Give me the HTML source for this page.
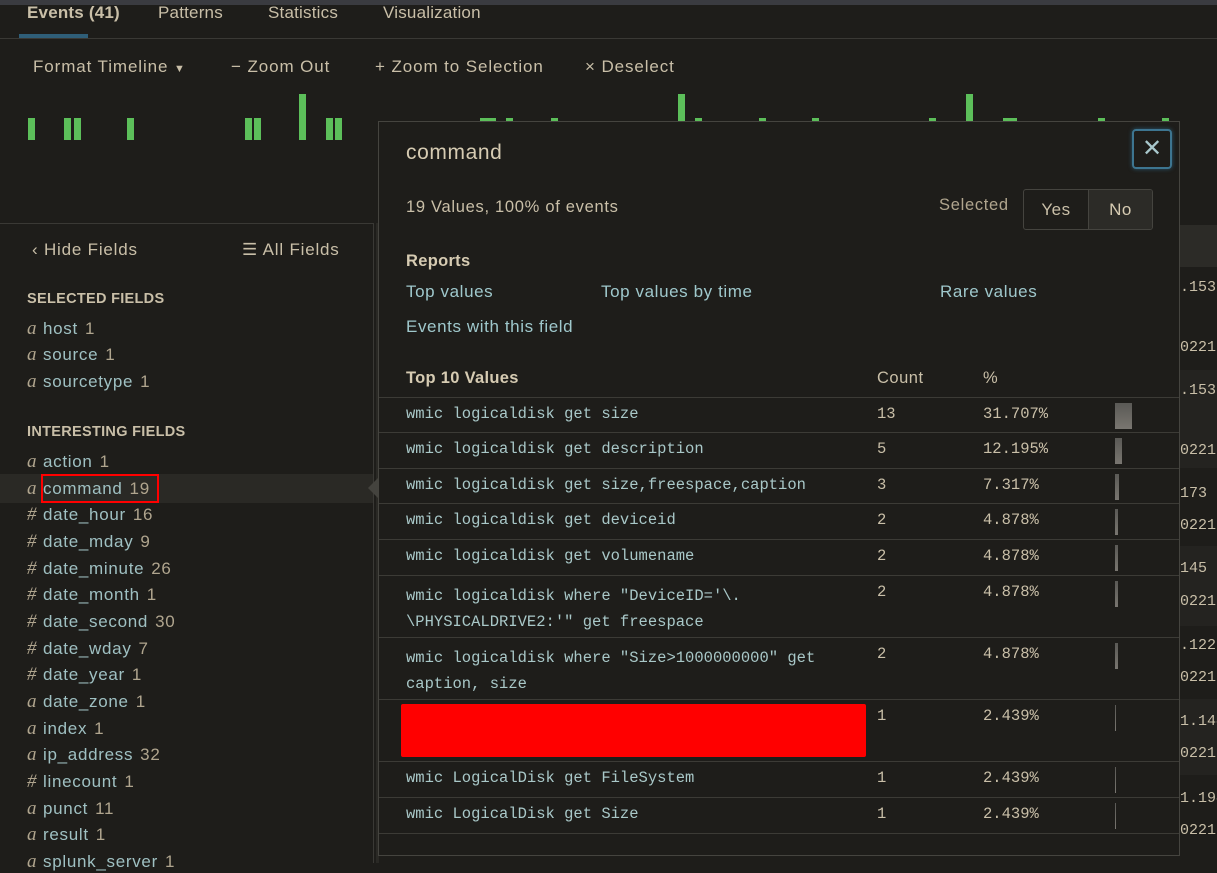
<!DOCTYPE html>
<html><head><style>
*{margin:0;padding:0;box-sizing:border-box}
body{width:1217px;height:863px;overflow:hidden;background:#1e1d1a;font-family:"Liberation Sans",sans-serif;color:#c9bfa8;position:relative;letter-spacing:0.5px}
.a{position:absolute;white-space:nowrap}
.tab{top:3px;font-size:17px;color:#c9bfa8;letter-spacing:0.2px}
.tl{top:57px;font-size:17px;color:#c9bfa8;letter-spacing:0.9px}
.bar{position:absolute;background:#5cbf5a;width:7px}
.f{position:absolute;left:27px;font-size:17px;color:#9fc0c2;letter-spacing:0.7px}
.f i{font-family:"Liberation Serif",serif;color:#b0a58e;font-size:19px;display:inline-block;width:16px}
.f b{font-weight:normal;color:#b0a58e;margin-left:7px}
.sh{position:absolute;left:27px;font-size:14.5px;font-weight:bold;color:#c9bfa8;letter-spacing:0.3px}
.ev{position:absolute;left:1180px;font-family:"Liberation Mono",monospace;font-size:15px;color:#c9bfa8;letter-spacing:0}
.row{position:absolute;left:379px;width:800px;border-top:1px solid #3c3b36}
.mono{font-family:"Liberation Mono",monospace;font-size:15.5px;color:#a9c8c8;letter-spacing:0}
.cnt{position:absolute;left:498px;top:7px;font-family:"Liberation Mono",monospace;font-size:15.5px;color:#c9bfa8;letter-spacing:0}
.pct{position:absolute;left:604px;top:7px;font-family:"Liberation Mono",monospace;font-size:15.5px;color:#c9bfa8;letter-spacing:0}
.vb{position:absolute;left:736px;top:5px;background:linear-gradient(#5a5955,#797670)}
.lk{color:#9fc8cc;font-size:17px;letter-spacing:0.6px}
</style></head><body>
<div class="a" style="left:0;top:0;width:1217px;height:5px;background:#3a3b40"></div>
<div class="a tab" style="left:27px;font-weight:bold">Events (41)</div>
<div class="a tab" style="left:158px">Patterns</div>
<div class="a tab" style="left:268px">Statistics</div>
<div class="a tab" style="left:383px">Visualization</div>
<div class="a" style="left:19px;top:34px;width:69px;height:4px;background:#2f5e78"></div>
<div class="a" style="left:0;top:38px;width:1217px;height:1px;background:#3a3935"></div>
<div class="a tl" style="left:33px">Format Timeline <span style="font-size:11px">▼</span></div>
<div class="a tl" style="left:231px">− Zoom Out</div>
<div class="a tl" style="left:375px">+ Zoom to Selection</div>
<div class="a tl" style="left:585px">× Deselect</div>
<div class="bar" style="left:28px;top:118px;height:22px"></div>
<div class="bar" style="left:64px;top:118px;height:22px"></div>
<div class="bar" style="left:74px;top:118px;height:22px"></div>
<div class="bar" style="left:127px;top:118px;height:22px"></div>
<div class="bar" style="left:245px;top:118px;height:22px"></div>
<div class="bar" style="left:254px;top:118px;height:22px"></div>
<div class="bar" style="left:299px;top:94px;height:46px"></div>
<div class="bar" style="left:326px;top:118px;height:22px"></div>
<div class="bar" style="left:335px;top:118px;height:22px"></div>
<div class="bar" style="left:480px;top:118px;height:4px;width:16px"></div>
<div class="bar" style="left:506px;top:118px;height:4px"></div>
<div class="bar" style="left:551px;top:118px;height:4px"></div>
<div class="bar" style="left:678px;top:94px;height:28px"></div>
<div class="bar" style="left:695px;top:118px;height:4px"></div>
<div class="bar" style="left:759px;top:118px;height:4px"></div>
<div class="bar" style="left:812px;top:118px;height:4px"></div>
<div class="bar" style="left:929px;top:118px;height:4px"></div>
<div class="bar" style="left:966px;top:94px;height:28px"></div>
<div class="bar" style="left:1003px;top:118px;height:4px;width:14px"></div>
<div class="bar" style="left:1098px;top:118px;height:4px"></div>
<div class="bar" style="left:1162px;top:118px;height:4px"></div>
<!-- sidebar -->
<div class="a" style="left:0;top:223px;width:374px;height:640px;border-top:1px solid #3a3935;border-right:1px solid #3a3935"></div>
<div class="a" style="left:376px;top:223px;width:3px;height:640px;background:#2a2925"></div>
<div class="a" style="left:32px;top:240px;font-size:17px;color:#c9bfa8;letter-spacing:0.8px">‹ Hide Fields</div>
<div class="a" style="left:242px;top:240px;font-size:17px;color:#c9bfa8;letter-spacing:0.8px">☰ All Fields</div>
<div class="sh" style="top:291px">SELECTED FIELDS</div>
<div class="f" style="top:318px"><i>a</i>host<b>1</b></div>
<div class="f" style="top:344px"><i>a</i>source<b>1</b></div>
<div class="f" style="top:371px"><i>a</i>sourcetype<b>1</b></div>
<div class="sh" style="top:424px">INTERESTING FIELDS</div>
<div class="f" style="top:451px"><i>a</i>action<b>1</b></div>
<div class="a" style="left:0;top:474px;width:373px;height:29px;background:#2a2925"></div>
<div class="a" style="left:368px;top:478px;width:0;height:0;border-top:10px solid transparent;border-bottom:10px solid transparent;border-right:10px solid #44433e"></div>
<div class="f" style="top:478px"><i>a</i>command<b>19</b></div>
<div class="a" style="left:41px;top:474px;width:118px;height:29px;border:2px solid #f00"></div>
<div class="f" style="top:504px"><i>#</i>date_hour<b>16</b></div>
<div class="f" style="top:531px"><i>#</i>date_mday<b>9</b></div>
<div class="f" style="top:558px"><i>#</i>date_minute<b>26</b></div>
<div class="f" style="top:584px"><i>#</i>date_month<b>1</b></div>
<div class="f" style="top:611px"><i>#</i>date_second<b>30</b></div>
<div class="f" style="top:638px"><i>#</i>date_wday<b>7</b></div>
<div class="f" style="top:664px"><i>#</i>date_year<b>1</b></div>
<div class="f" style="top:691px"><i>a</i>date_zone<b>1</b></div>
<div class="f" style="top:718px"><i>a</i>index<b>1</b></div>
<div class="f" style="top:744px"><i>a</i>ip_address<b>32</b></div>
<div class="f" style="top:771px"><i>#</i>linecount<b>1</b></div>
<div class="f" style="top:798px"><i>a</i>punct<b>11</b></div>
<div class="f" style="top:824px"><i>a</i>result<b>1</b></div>
<div class="f" style="top:851px"><i>a</i>splunk_server<b>1</b></div>
<!-- right events -->
<div class="a" style="left:1180px;top:225px;width:37px;height:42px;background:#2c2b27"></div>
<div class="a" style="left:1180px;top:370px;width:37px;height:98px;background:#242320"></div>
<div class="a" style="left:1180px;top:546px;width:37px;height:80px;background:#242320"></div>
<div class="a" style="left:1180px;top:699px;width:37px;height:76px;background:#242320"></div>
<div class="ev" style="top:279px">.153</div>
<div class="ev" style="top:339px">0221.</div>
<div class="ev" style="top:382px">.153</div>
<div class="ev" style="top:442px">0221.</div>
<div class="ev" style="top:485px">173</div>
<div class="ev" style="top:517px">0221.</div>
<div class="ev" style="top:560px">145</div>
<div class="ev" style="top:593px">0221.</div>
<div class="ev" style="top:637px">.122</div>
<div class="ev" style="top:669px">0221.</div>
<div class="ev" style="top:713px">1.144</div>
<div class="ev" style="top:745px">0221.</div>
<div class="ev" style="top:790px">1.194</div>
<div class="ev" style="top:822px">0221.</div>
<!-- popup -->
<div class="a" style="left:378px;top:121px;width:802px;height:735px;background:#1e1d1a;border:1px solid #45443f"></div>
<div class="a" style="left:406px;top:141px;font-size:21px;color:#d6cbb2;letter-spacing:0.6px">command</div>
<div class="a" style="left:1132px;top:129px;width:40px;height:40px;border:2px solid #3d7590;border-radius:4px;box-shadow:0 0 4px #2b5870;color:#a9c8cc;font-size:24px;text-align:center;line-height:35px;letter-spacing:0">✕</div>
<div class="a" style="left:406px;top:198px;font-size:16.5px;color:#c9bfa8;letter-spacing:0.7px">19 Values, 100% of events</div>
<div class="a" style="left:939px;top:196px;font-size:16.5px;color:#b0a58e;letter-spacing:0.7px">Selected</div>
<div class="a" style="left:1023px;top:189px;width:130px;height:41px;border:1px solid #45443f;border-radius:3px;overflow:hidden;display:flex;font-size:17px">
<div style="width:65px;border-right:1px solid #45443f;text-align:center;line-height:39px;color:#c9bfa8">Yes</div>
<div style="flex:1;background:#2c2b27;text-align:center;line-height:39px;color:#d6cbb2">No</div></div>
<div class="a" style="left:406px;top:252px;font-size:16.5px;font-weight:bold;color:#d6cbb2;letter-spacing:0.3px">Reports</div>
<div class="a lk" style="left:406px;top:282px">Top values</div>
<div class="a lk" style="left:601px;top:282px">Top values by time</div>
<div class="a lk" style="left:940px;top:282px">Rare values</div>
<div class="a lk" style="left:406px;top:317px">Events with this field</div>
<div class="a" style="left:406px;top:369px;font-size:16.5px;font-weight:bold;color:#d6cbb2;letter-spacing:0.3px">Top 10 Values</div>
<div class="a" style="left:877px;top:369px;font-size:16.5px;color:#c9bfa8">Count</div>
<div class="a" style="left:983px;top:369px;font-size:16.5px;color:#c9bfa8">%</div>

<div class="row" style="top:397px;height:36px"><div class="a mono" style="left:27px;top:7px">wmic logicaldisk get size</div><div class="cnt">13</div><div class="pct">31.707%</div><div class="vb" style="width:17px;height:26px"></div></div>
<div class="row" style="top:432px;height:36px"><div class="a mono" style="left:27px;top:7px">wmic logicaldisk get description</div><div class="cnt">5</div><div class="pct">12.195%</div><div class="vb" style="width:7px;height:26px"></div></div>
<div class="row" style="top:468px;height:36px"><div class="a mono" style="left:27px;top:7px">wmic logicaldisk get size,freespace,caption</div><div class="cnt">3</div><div class="pct">7.317%</div><div class="vb" style="width:4px;height:26px"></div></div>
<div class="row" style="top:503px;height:36px"><div class="a mono" style="left:27px;top:7px">wmic logicaldisk get deviceid</div><div class="cnt">2</div><div class="pct">4.878%</div><div class="vb" style="width:3px;height:26px"></div></div>
<div class="row" style="top:539px;height:36px"><div class="a mono" style="left:27px;top:7px">wmic logicaldisk get volumename</div><div class="cnt">2</div><div class="pct">4.878%</div><div class="vb" style="width:3px;height:26px"></div></div>
<div class="row" style="top:575px;height:62px"><div class="a mono" style="left:27px;top:7px;line-height:26px">wmic logicaldisk where "DeviceID='\.<br>\PHYSICALDRIVE2:'" get freespace</div><div class="cnt">2</div><div class="pct">4.878%</div><div class="vb" style="width:3px;height:26px"></div></div>
<div class="row" style="top:637px;height:62px"><div class="a mono" style="left:27px;top:7px;line-height:26px">wmic logicaldisk where "Size&gt;1000000000" get<br>caption, size</div><div class="cnt">2</div><div class="pct">4.878%</div><div class="vb" style="width:3px;height:26px"></div></div>
<div class="row" style="top:699px;height:62px"><div class="a" style="left:22px;top:4px;width:465px;height:53px;background:#f00;border-radius:2px"></div><div class="cnt">1</div><div class="pct">2.439%</div><div class="vb" style="width:1px;height:26px"></div></div>
<div class="row" style="top:761px;height:36px"><div class="a mono" style="left:27px;top:7px">wmic LogicalDisk get FileSystem</div><div class="cnt">1</div><div class="pct">2.439%</div><div class="vb" style="width:1px;height:26px"></div></div>
<div class="row" style="top:797px;height:36px"><div class="a mono" style="left:27px;top:7px">wmic LogicalDisk get Size</div><div class="cnt">1</div><div class="pct">2.439%</div><div class="vb" style="width:1px;height:26px"></div></div>
<div class="row" style="top:833px;height:1px"></div>
</body></html>
